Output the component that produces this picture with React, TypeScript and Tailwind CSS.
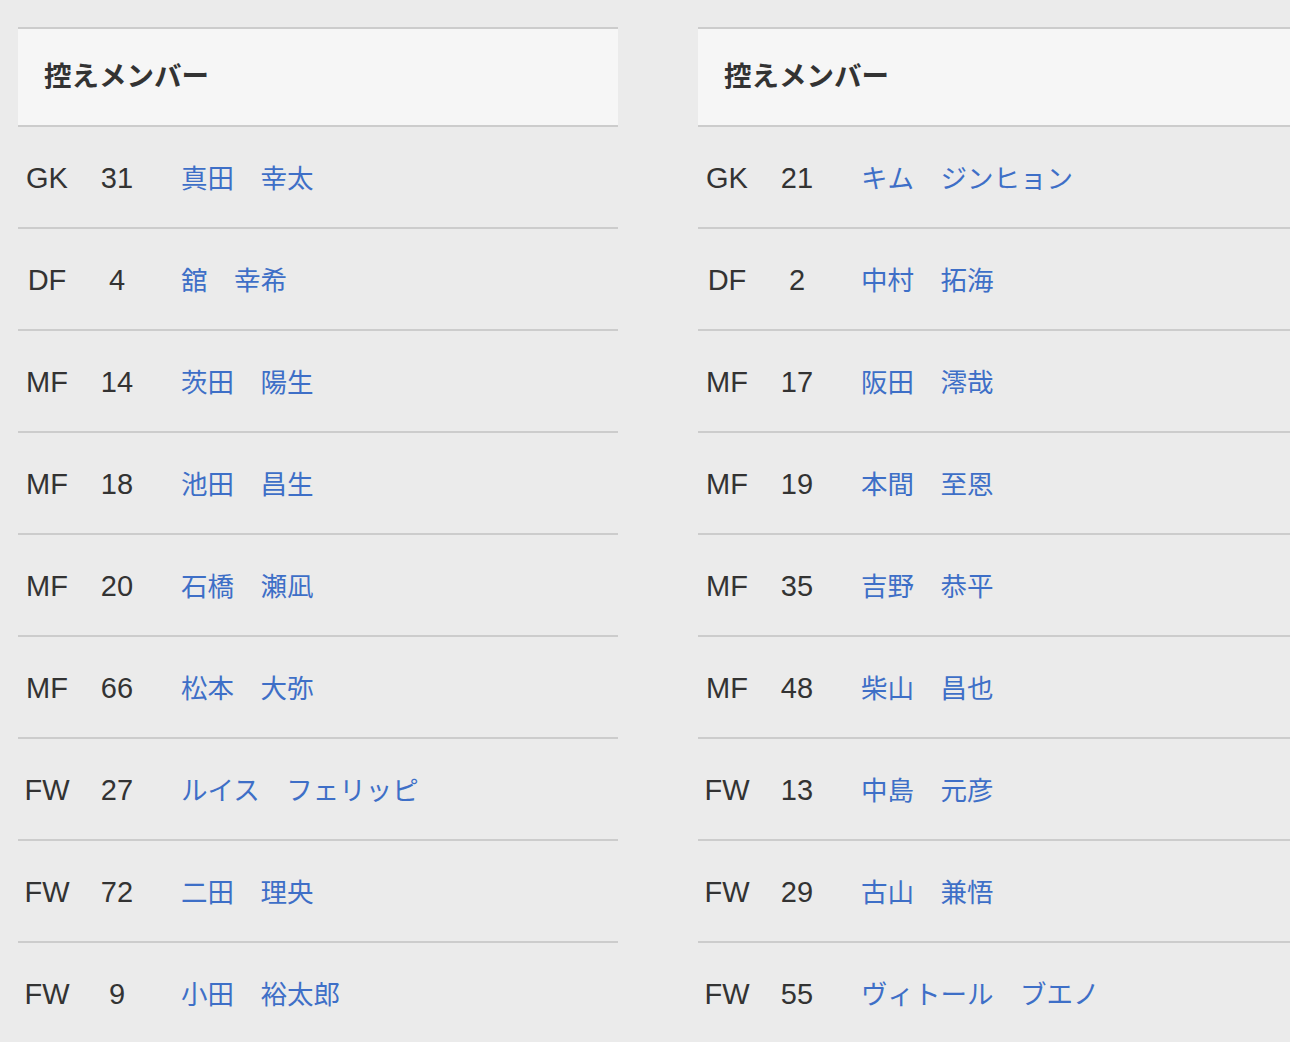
import React from "react";

type Player = { pos: string; no: string; name: string };

const left: Player[] = [
	{ pos: "GK", no: "31", name: "真田　幸太" },
	{ pos: "DF", no: "4", name: "舘　幸希" },
	{ pos: "MF", no: "14", name: "茨田　陽生" },
	{ pos: "MF", no: "18", name: "池田　昌生" },
	{ pos: "MF", no: "20", name: "石橋　瀬凪" },
	{ pos: "MF", no: "66", name: "松本　大弥" },
	{ pos: "FW", no: "27", name: "ルイス　フェリッピ" },
	{ pos: "FW", no: "72", name: "二田　理央" },
	{ pos: "FW", no: "9", name: "小田　裕太郎" },
];

const right: Player[] = [
	{ pos: "GK", no: "21", name: "キム　ジンヒョン" },
	{ pos: "DF", no: "2", name: "中村　拓海" },
	{ pos: "MF", no: "17", name: "阪田　澪哉" },
	{ pos: "MF", no: "19", name: "本間　至恩" },
	{ pos: "MF", no: "35", name: "吉野　恭平" },
	{ pos: "MF", no: "48", name: "柴山　昌也" },
	{ pos: "FW", no: "13", name: "中島　元彦" },
	{ pos: "FW", no: "29", name: "古山　兼悟" },
	{ pos: "FW", no: "55", name: "ヴィトール　ブエノ" },
];

const SubsTable: React.FC<{ players: Player[] }> = ({ players }) => {
	return (
		<div className="w-[600px] shrink-0 border-t-2 border-[#cccccc]">
			<div className="h-[98px] flex items-center pl-[26px] pb-[4px] bg-[#f6f6f6] border-b-2 border-[#cccccc] text-[27.5px] font-bold text-[#333333]">
				控えメンバー
			</div>
			{players.map((p) => (
				<div key={p.pos + p.no} className="h-[102px] flex items-center border-b-2 border-[#cccccc]">
					<span className="w-[58px] mt-[4px] text-center text-[29px] text-[#333333] font-['Liberation_Sans','Noto_Sans_CJK_JP',sans-serif]">
						{p.pos}
					</span>
					<span className="w-[82px] mt-[4px] text-center text-[29px] text-[#333333] font-['Liberation_Sans','Noto_Sans_CJK_JP',sans-serif]">
						{p.no}
					</span>
					<a href="#" className="ml-[23px] text-[26.5px] text-[#3e6fc7]">
						{p.name}
					</a>
				</div>
			))}
		</div>
	);
};

export default function App() {
	return (
		<div className="w-[1290px] h-[1042px] overflow-hidden bg-[#ebebeb] font-['Noto_Sans_CJK_JP',sans-serif]">
			<div className="flex gap-[80px] pt-[27px] pl-[18px]">
				<SubsTable players={left} />
				<SubsTable players={right} />
			</div>
		</div>
	);
}
